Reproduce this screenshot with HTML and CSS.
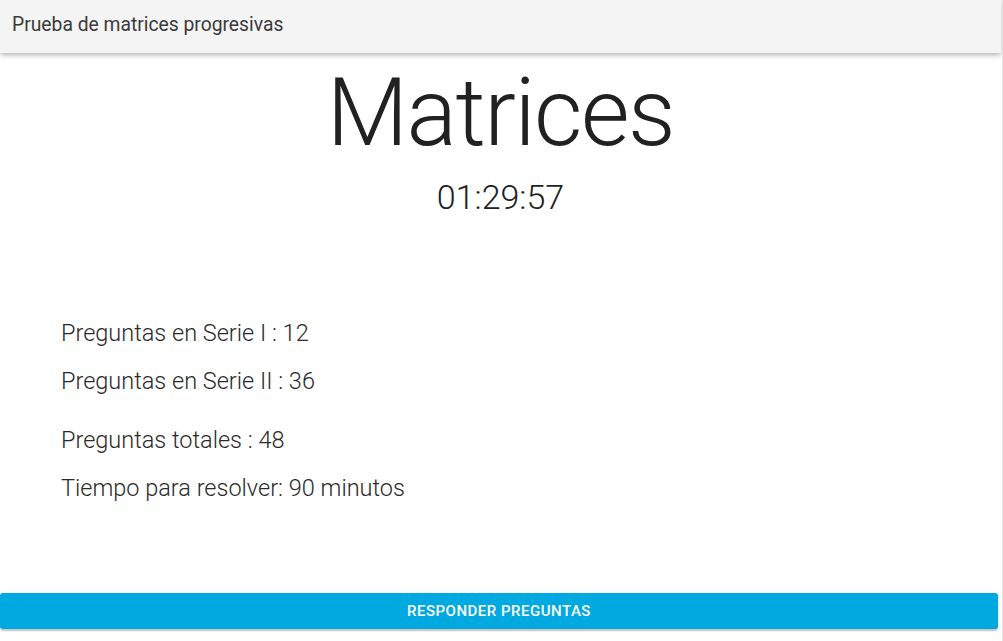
FILE: index.html
```html
<!DOCTYPE html>
<html lang="es">
<head>
<meta charset="utf-8">
<title>Prueba de matrices progresivas</title>
<link rel="stylesheet" href="styles.css">
</head>
<body>
<div class="app">
  <header class="topbar">
    <span class="topbar-title">Prueba de matrices progresivas</span>
  </header>
  <main class="content">
    <h1 class="title">Matrices</h1>
    <div class="timer">01:29:57</div>
    <ul class="info">
      <li>Preguntas en Serie I : 12</li>
      <li>Preguntas en Serie II : 36</li>
    </ul>
    <ul class="info info-second">
      <li>Preguntas totales : 48</li>
      <li>Tiempo para resolver: 90 minutos</li>
    </ul>
  </main>
  <button class="answer-btn" type="button">Responder preguntas</button>
</div>
</body>
</html>
```

FILE: styles.css
```css
html, body {
  margin: 0;
  padding: 0;
  background: #ffffff;
}

body {
  font-family: Roboto, "Noto Sans", sans-serif;
  color: #212121;
  height: 641px;
  border-right: 1px solid #e6e6e6;
  box-sizing: border-box;
  width: 1003px;
}

.app {
  width: 1001px;
  display: flex;
  flex-direction: column;
}

.topbar {
  height: 53px;
  background: #f4f4f4;
  box-shadow: 0 2px 5px rgba(0, 0, 0, 0.3);
  display: flex;
  align-items: center;
  padding-left: 12px;
  position: relative;
  z-index: 1;
}

.topbar-title {
  font-size: 19.3px;
  color: #3a3a3a;
  font-weight: 400;
  margin-top: -4px;
}

.content {
  display: flex;
  flex-direction: column;
}

.title {
  margin: 13px 0 0;
  font-size: 94px;
  line-height: 94px;
  font-weight: 300;
  text-align: center;
  letter-spacing: -1.5px;
  color: #212121;
}

.timer {
  margin-top: 20px;
  font-size: 34px;
  line-height: 34px;
  font-weight: 300;
  text-align: center;
  color: #212121;
}

.info {
  list-style: none;
  margin: 0;
  padding: 0 0 0 61px;
}

.info:first-of-type {
  margin-top: 95px;
}

.info-second {
  margin-top: 11px;
}

.info li {
  font-size: 23.5px;
  line-height: 48px;
  font-weight: 300;
  color: #2a2a2a;
}

.answer-btn {
  margin-top: 81px;
  width: 998px;
  height: 36px;
  border: none;
  border-radius: 3px;
  background: #00a9e0;
  color: #ffffff;
  font-family: Roboto, "Noto Sans", sans-serif;
  font-size: 15px;
  font-weight: 500;
  letter-spacing: 0.5px;
  text-transform: uppercase;
  box-shadow: 0 2px 2px rgba(0, 0, 0, 0.24);
  padding: 0;
}
```
